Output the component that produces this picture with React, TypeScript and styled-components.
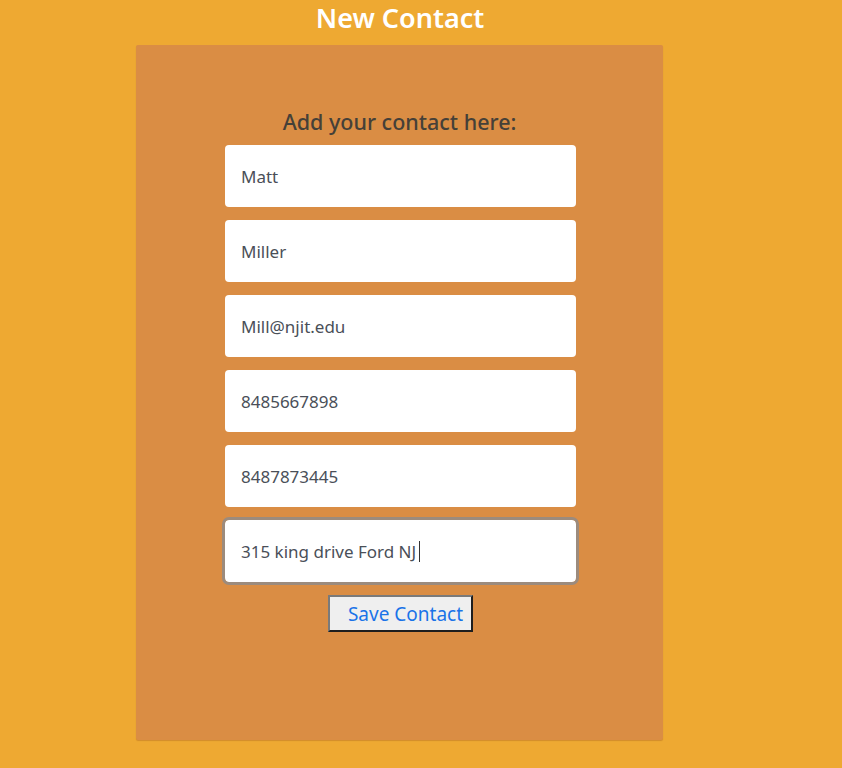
import React from "react";
import styled, { createGlobalStyle } from "styled-components";

const Global = createGlobalStyle`
  html, body { margin: 0; padding: 0; background: #eea932; }
  body { font-family: "Noto Sans", "Open Sans", sans-serif; }
`;

const Page = styled.div`
  width: 800px;
  height: 768px;
  display: flex;
  flex-direction: column;
  align-items: center;
  background: #eea932;
`;

const Title = styled.h1`
  margin: 0;
  height: 45px;
  font-size: 27px;
  font-weight: 600;
  line-height: 36px;
  color: #ffffff;
`;

const Panel = styled.div`
  width: 527px;
  height: 695px;
  box-sizing: border-box;
  margin-left: -1px;
  background: #da8d44;
  border-radius: 2px;
  box-shadow: 0 1px 1px rgba(160, 90, 30, 0.35);
  display: flex;
  flex-direction: column;
  align-items: center;
  padding-top: 63px;
`;

const Heading = styled.h2`
  margin: 0 0 9px;
  font-size: 21.5px;
  font-weight: 500;
  line-height: 28px;
  color: #454038;
`;

const Fields = styled.div`
  display: flex;
  flex-direction: column;
  gap: 13px;
  align-items: center;
  margin-left: 2px;
`;

const Input = styled.input`
  width: 351px;
  height: 62px;
  box-sizing: border-box;
  border: none;
  border-radius: 4px;
  background: #fff;
  padding: 0 16px;
  font-family: "Noto Sans", "Open Sans", sans-serif;
  font-size: 17px;
  color: #4a4f58;
  outline: none;
`;

const Caret = styled.span`
  display: inline-block;
  width: 1px;
  height: 21px;
  background: #333;
  vertical-align: middle;
  margin-left: 3px;
`;

const FocusBox = styled.div`
  width: 351px;
  height: 62px;
  box-sizing: border-box;
  border-radius: 4px;
  background: #fff;
  outline: 3px solid #9c8b7d;
  padding: 0 16px;
  display: flex;
  align-items: center;
  font-size: 17px;
  color: #4a4f58;
`;

const Button = styled.button`
  margin-top: 13px;
  margin-left: 2px;
  height: 37px;
  padding: 0 8px 0 18px;
  background: #efefef;
  border: 2px solid;
  border-color: #7a7a7a #1e1e1e #1e1e1e #7a7a7a;
  font-family: "Noto Sans", "Open Sans", sans-serif;
  font-size: 19px;
  color: #1a73e8;
`;

const values = ["Matt", "Miller", "Mill@njit.edu", "8485667898", "8487873445"];

export default function App() {
  return (
    <>
      <Global />
      <Page>
        <Title>New Contact</Title>
        <Panel>
          <Heading>Add your contact here:</Heading>
          <Fields>
            {values.map((v) => (
              <Input key={v} defaultValue={v} readOnly />
            ))}
            <FocusBox>
              315 king drive Ford NJ
              <Caret />
            </FocusBox>
          </Fields>
          <Button>Save Contact</Button>
        </Panel>
      </Page>
    </>
  );
}
